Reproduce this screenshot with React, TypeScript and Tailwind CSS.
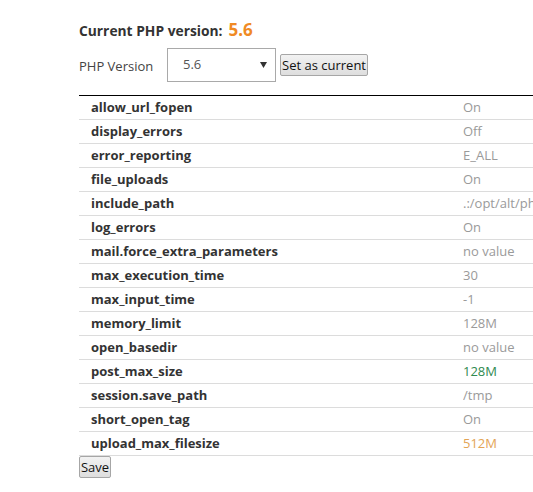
const rows: { name: string; value: string; tone?: "green" | "orange" }[] = [
  { name: "allow_url_fopen", value: "On" },
  { name: "display_errors", value: "Off" },
  { name: "error_reporting", value: "E_ALL" },
  { name: "file_uploads", value: "On" },
  { name: "include_path", value: ".:/opt/alt/php56/usr/share/pear" },
  { name: "log_errors", value: "On" },
  { name: "mail.force_extra_parameters", value: "no value" },
  { name: "max_execution_time", value: "30" },
  { name: "max_input_time", value: "-1" },
  { name: "memory_limit", value: "128M" },
  { name: "open_basedir", value: "no value" },
  { name: "post_max_size", value: "128M", tone: "green" },
  { name: "session.save_path", value: "/tmp" },
  { name: "short_open_tag", value: "On" },
  { name: "upload_max_filesize", value: "512M", tone: "orange" },
];

const toneClass = (tone?: "green" | "orange") => {
  if (tone === "green") return "text-[#2f8a4f]";
  if (tone === "orange") return "text-[#e3a455]";
  return "text-[#9a9a9a]";
};

const App = () => {
  return (
    <div className="w-[533px] h-[492px] overflow-hidden bg-white font-['Open_Sans',_'Noto_Sans',_sans-serif] text-[13px] text-[#333]">
      <div className="pl-[79px] pt-[17px]">
        <div className="flex items-baseline h-[24px]">
          <span className="font-bold text-[13.8px] text-[#333]">Current PHP version:</span>
          <span className="ml-[6px] font-bold text-[17px] text-[#f08a24]">5.6</span>
        </div>

        <div className="flex items-center mt-[7px]">
          <label className="w-[88px] text-[13px] text-[#444] pt-[4px]">PHP Version</label>
          <div className="relative">
            <select
              defaultValue="5.6"
              className="appearance-none w-[109px] h-[34px] border border-[#a9a9a9] bg-white pl-[15px] text-[13px] text-[#555] outline-none"
            >
              <option value="5.6">5.6</option>
            </select>
            <svg className="absolute right-[9px] top-[14px] pointer-events-none" width="7" height="6" viewBox="0 0 7 6">
              <path d="M0 0h7L3.5 6z" fill="#333" />
            </svg>
          </div>
          <button className="ml-[4px] h-[22px] w-[88px] border border-[#a6a6a6] rounded-[2px] bg-gradient-to-b from-[#f2f2f2] to-[#dedede] text-[13px] text-[#111] leading-none">
            Set as current
          </button>
        </div>

        <div className="mt-[13px] w-[480px] border-t border-black">
          {rows.map((r) => (
            <div key={r.name} className="flex items-center h-[24px] border-b border-[#dcdcdc]">
              <div className="w-[384px] pl-[12px] font-bold text-[#333] whitespace-nowrap">{r.name}</div>
              <div className={`flex-1 whitespace-nowrap overflow-hidden ${toneClass(r.tone)}`}>{r.value}</div>
            </div>
          ))}
        </div>

        <button className="h-[22px] w-[32px] border border-[#a6a6a6] rounded-[2px] bg-gradient-to-b from-[#f2f2f2] to-[#dedede] text-[13px] text-[#111] leading-none">
          Save
        </button>
      </div>
    </div>
  );
};

export default App;
